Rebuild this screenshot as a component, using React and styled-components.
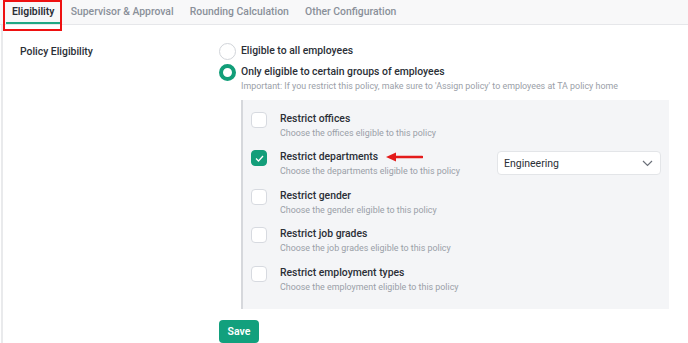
import React from "react";
import styled, { createGlobalStyle } from "styled-components";

const Global = createGlobalStyle`
  html, body { margin: 0; padding: 0; background: #fff; }
  body { font-family: Roboto, "Noto Sans", sans-serif; color: #2b2f36; }
  * { box-sizing: border-box; }
`;

const Page = styled.div`
  width: 688px;
  height: 343px;
  overflow: hidden;
  position: relative;
`;

const TabBar = styled.div`
  height: 25px;
  background: #f8f8f9;
  border-bottom: 1px solid #e6e7ea;
  display: flex;
  padding-left: 6px;
  position: relative;
  z-index: 1;
`;

const Tab = styled.div`
  position: relative;
  height: 24px;
  padding: 5px 6px 0;
  margin-right: 4.2px;
  font-size: 10.4px;
  font-weight: ${(p) => (p.$active ? 600 : 500)};
  color: ${(p) => (p.$active ? "#2b2f36" : "#8a9099")};
  border-bottom: 2px solid ${(p) => (p.$active ? "#20a884" : "transparent")};
  white-space: nowrap;
`;

const Highlight = styled.div`
  position: absolute;
  left: -3px;
  top: 0;
  width: 59px;
  height: 31px;
  border: 2.5px solid #ee1111;
`;

const Body = styled.div`
  display: flex;
  border-left: 2px solid #e9eaec;
  margin-left: 1px;
  padding-top: 18px;
  height: 318px;
`;

const SideLabel = styled.div`
  width: 216px;
  padding-left: 17px;
  padding-top: 2px;
  font-size: 10.4px;
  font-weight: 500;
  color: #2b2f36;
`;

const Main = styled.div`
  display: flex;
  flex-direction: column;
  width: 450px;
`;

const RadioRow = styled.div`
  display: flex;
  align-items: flex-start;
  gap: 5px;
  margin-bottom: ${(p) => p.$mb || 0}px;
`;

const Radio = styled.span`
  width: 17px;
  height: 17px;
  border-radius: 50%;
  flex: none;
  border: ${(p) => (p.$on ? "4px solid #129e79" : "1.6px solid #d1d4d9")};
  background: #fff;
`;

const RadioText = styled.div`
  padding-top: 1px;
`;

const Title = styled.div`
  font-size: 10.4px;
  font-weight: 500;
  color: #2b2f36;
  line-height: 14px;
`;

const Sub = styled.div`
  font-size: 8.9px;
  color: #9aa0a8;
  line-height: 12px;
  margin-top: 1px;
`;

const Panel = styled.div`
  margin-left: 22px;
  margin-top: 8px;
  width: 428px;
  height: 209px;
  background: #f4f5f7;
  border-left: 2px solid #d6d8dc;
  padding: 11.5px 8px 0 8px;
  display: flex;
  flex-direction: column;
  gap: 12.5px;
`;

const Option = styled.div`
  display: flex;
  align-items: flex-start;
  height: 26px;
`;

const Check = styled.span`
  width: 16px;
  height: 16px;
  border-radius: 4px;
  flex: none;
  border: 1.5px solid ${(p) => (p.$on ? "#139e7a" : "#d7dae0")};
  background: ${(p) => (p.$on ? "#139e7a" : "#fff")};
  display: flex;
  align-items: center;
  justify-content: center;
`;

const OptText = styled.div`
  margin-left: 13px;
  flex: 1;
`;

const TitleLine = styled.div`
  display: flex;
  align-items: center;
  gap: 8px;
`;

const Select = styled.div`
  width: 164px;
  height: 24px;
  align-self: center;
  background: #fff;
  border: 1px solid #e3e5e8;
  border-radius: 4px;
  display: flex;
  align-items: center;
  justify-content: space-between;
  padding: 0 7px 0 6px;
  font-size: 10.5px;
  color: #2b2f36;
`;

const SaveBtn = styled.button`
  margin-top: 11px;
  width: 40px;
  height: 23px;
  border: none;
  border-radius: 4px;
  background: #12a07d;
  color: #fff;
  font-family: Roboto, sans-serif;
  font-size: 10.5px;
  font-weight: 600;
  padding: 0;
`;

const options = [
  ["Restrict offices", "Choose the offices eligible to this policy"],
  ["Restrict departments", "Choose the departments eligible to this policy", true],
  ["Restrict gender", "Choose the gender eligible to this policy"],
  ["Restrict job grades", "Choose the job grades eligible to this policy"],
  ["Restrict employment types", "Choose the employment eligible to this policy"],
];

const Arrow = () => (
  <svg width="37" height="10" viewBox="0 0 37 10">
    <path d="M8 5 H36" stroke="#e41b1b" strokeWidth="2.6" strokeLinecap="round" />
    <path d="M0 5 L10 0.5 L10 9.5 Z" fill="#e41b1b" />
  </svg>
);

export default function App() {
  return (
    <Page>
      <Global />
      <TabBar>
        <Tab $active>
          Eligibility
          <Highlight />
        </Tab>
        <Tab>Supervisor &amp; Approval</Tab>
        <Tab>Rounding Calculation</Tab>
        <Tab>Other Configuration</Tab>
      </TabBar>
      <Body>
        <SideLabel>Policy Eligibility</SideLabel>
        <Main>
          <RadioRow $mb={4}>
            <Radio />
            <RadioText>
              <Title>Eligible to all employees</Title>
            </RadioText>
          </RadioRow>
          <RadioRow>
            <Radio $on />
            <RadioText>
              <Title>Only eligible to certain groups of employees</Title>
              <Sub>Important: If you restrict this policy, make sure to 'Assign policy' to employees at TA policy home</Sub>
            </RadioText>
          </RadioRow>
          <Panel>
            {options.map(([t, s, on]) => (
              <Option key={t}>
                <Check $on={on}>
                  {on && (
                    <svg width="9" height="7" viewBox="0 0 9 7">
                      <path d="M1 3.5 L3.5 6 L8 1" stroke="#fff" strokeWidth="1.3" fill="none" />
                    </svg>
                  )}
                </Check>
                <OptText>
                  <TitleLine>
                    <Title>{t}</Title>
                    {on && <Arrow />}
                  </TitleLine>
                  <Sub>{s}</Sub>
                </OptText>
                {on && (
                  <Select>
                    Engineering
                    <svg width="11" height="7" viewBox="0 0 11 7">
                      <path d="M1 1 L5.5 5.5 L10 1" stroke="#6b7079" strokeWidth="1.2" fill="none" />
                    </svg>
                  </Select>
                )}
              </Option>
            ))}
          </Panel>
          <SaveBtn>Save</SaveBtn>
        </Main>
      </Body>
    </Page>
  );
}
